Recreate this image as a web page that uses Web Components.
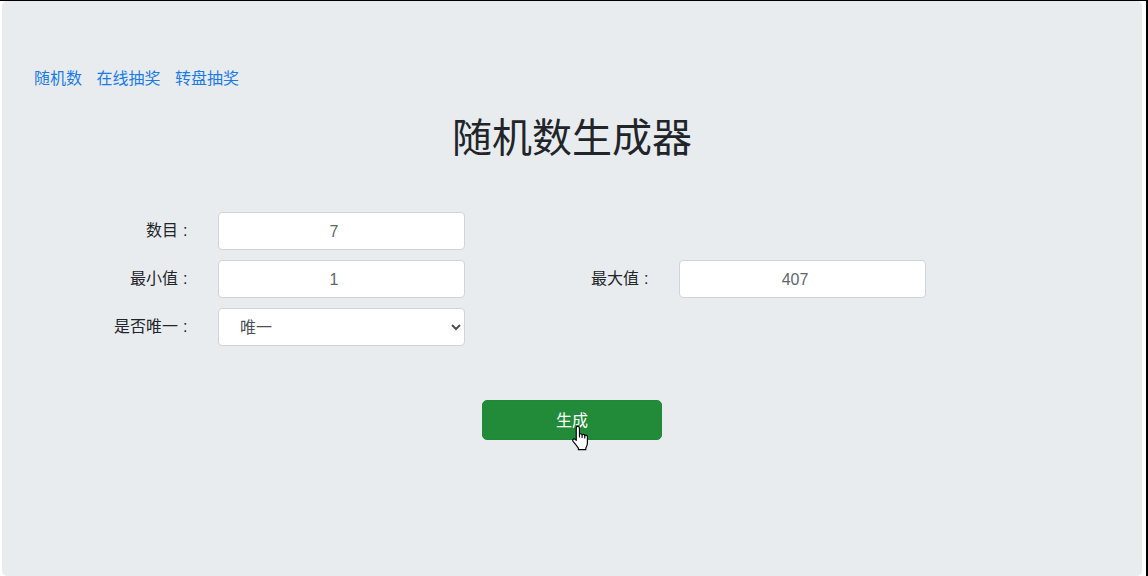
<!DOCTYPE html>
<html lang="zh">
<head>
<meta charset="utf-8">
<title>随机数生成器</title>
<style>
html, body { margin: 0; height: 100%; background: #fff; }
body {
    box-sizing: border-box;
    height: 576px;
    overflow: hidden;
    border-top: 1px solid #000;
    border-right: 2px solid #000;
    font-family: "Liberation Sans", "Noto Sans CJK SC", sans-serif;
    font-size: 16px;
    color: #212529;
}
</style>
</head>
<body>
<app-jumbotron>
    <nav-links>
        <a href="#" slot="link">随机数</a>
        <a href="#" slot="link">在线抽奖</a>
        <a href="#" slot="link">转盘抽奖</a>
    </nav-links>
    <page-title>随机数生成器</page-title>
    <random-form></random-form>
    <go-button>生成</go-button>
</app-jumbotron>

<script>
class AppJumbotron extends HTMLElement {
    constructor() {
        super();
        this.shadowDOM = this.attachShadow({mode: "open"});
    }
    connectedCallback() {
        this.shadowDOM.innerHTML = `
        <style>
        :host {
            display: block;
            box-sizing: border-box;
            height: 575px;
            margin: 0 4px 0 2px;
            padding: 68px 32px 0;
            background-color: #e9ecef;
            border-radius: 5px;
        }
        </style>
        <slot></slot>
        `;
    }
}

class NavLinks extends HTMLElement {
    constructor() {
        super();
        this.shadowDOM = this.attachShadow({mode: "open"});
    }
    connectedCallback() {
        this.shadowDOM.innerHTML = `
        <style>
        :host {
            display: flex;
            gap: 14.5px;
            line-height: 20px;
        }
        ::slotted(a) {
            color: #1a7be6;
            text-decoration: none;
        }
        </style>
        <slot name="link"></slot>
        `;
    }
}

class PageTitle extends HTMLElement {
    constructor() {
        super();
        this.shadowDOM = this.attachShadow({mode: "open"});
    }
    connectedCallback() {
        this.shadowDOM.innerHTML = `
        <style>
        :host {
            display: block;
            margin-top: 19px;
            text-align: center;
            font-size: 40px;
            font-weight: 400;
            line-height: 60px;
        }
        </style>
        <slot></slot>
        `;
    }
}

class RandomForm extends HTMLElement {
    constructor() {
        super();
        this.shadowDOM = this.attachShadow({mode: "open"});
    }
    connectedCallback() {
        this.shadowDOM.innerHTML = `
        <style>
        :host {
            display: grid;
            grid-template-columns: 184px 247px 214px 247px;
            grid-auto-rows: 38px;
            row-gap: 10px;
            margin-top: 44px;
        }
        label {
            align-self: center;
            padding-right: 30.5px;
            text-align: right;
            line-height: 24px;
            word-spacing: 0.5px;
        }
        input, select {
            box-sizing: border-box;
            width: 100%;
            height: 38px;
            margin: 0;
            border: 1px solid #ced4da;
            border-radius: 4px;
            background-color: #fff;
            color: #495057;
            font: inherit;
            outline: none;
        }
        input {
            padding: 7px 12px 5px;
            text-align: center;
            color: #5f666d;
        }
        select {
            padding: 6px 8px 6px 17px;
        }
        .first { grid-column: 1; }
        </style>
        <label class="first">数目 :</label>
        <input type="number" value="7">
        <label class="first">最小值 :</label>
        <input type="number" value="1">
        <label>最大值 :</label>
        <input type="number" value="407">
        <label class="first">是否唯一 :</label>
        <select>
            <option>唯一</option>
            <option>不唯一</option>
        </select>
        `;
    }
}

class GoButton extends HTMLElement {
    constructor() {
        super();
        this.shadowDOM = this.attachShadow({mode: "open"});
    }
    connectedCallback() {
        this.shadowDOM.innerHTML = `
        <style>
        :host {
            display: block;
            width: 180px;
            margin: 54px auto 0;
        }
        button {
            position: relative;
            display: block;
            box-sizing: border-box;
            width: 100%;
            height: 40px;
            padding: 0 0 2px;
            border: 1px solid #218838;
            border-radius: 5px;
            background-color: #228b3a;
            color: #fff;
            font: inherit;
        }
        svg {
            position: absolute;
            left: 89px;
            top: 24px;
        }
        </style>
        <button type="button">
            <slot></slot>
            <svg width="17" height="26" viewBox="0 0 16 24">
                <path d="M4 2.500C4 .6 7 .6 7 2.500V9C7 7.600 9.500 7.600 9.500 9.500 9.500 8.200 12 8.200 12 10 12 9 14.500 9 14.500 10.800V17C14.500 19 13.800 20 13 21.500V23H6V21.500C4.500 19.500 3 17.500 1.200 15.500-.2 13.800 1.500 12 3 13.300L4 14.300Z" fill="#fff" stroke="#000" stroke-width="1.100" stroke-linejoin="round"/>
                <path d="M7 9v2.500M9.500 9.500v2.500M12 10v2.500" fill="none" stroke="#000" stroke-width="1"/>
            </svg>
        </button>
        `;
    }
}

customElements.define("app-jumbotron", AppJumbotron);
customElements.define("nav-links", NavLinks);
customElements.define("page-title", PageTitle);
customElements.define("random-form", RandomForm);
customElements.define("go-button", GoButton);
</script>
</body>
</html>
